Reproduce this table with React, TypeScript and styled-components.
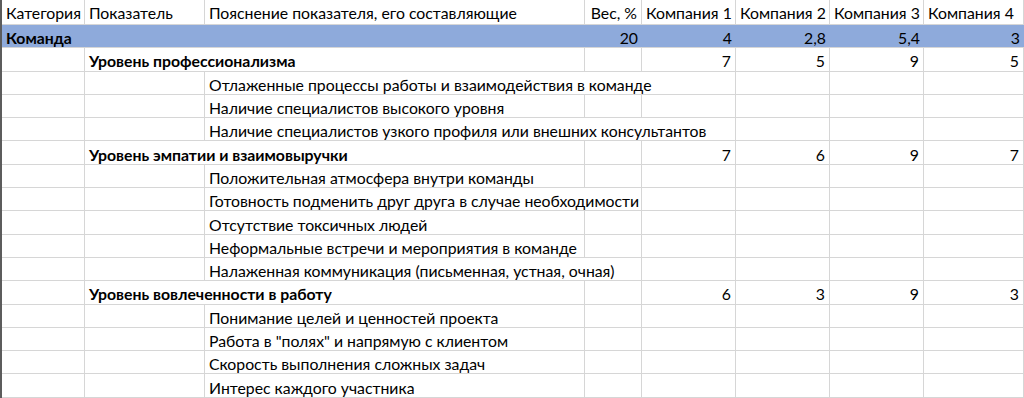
import * as React from 'react';
import styled, {createGlobalStyle} from 'styled-components';

const GlobalStyle = createGlobalStyle`
  html, body {
    margin: 0;
    padding: 0;
    background: #fff;
  }
  body {
    font-family: Lato, "Open Sans", "Liberation Sans", sans-serif;
    color: #000;
    overflow: hidden;
  }
`;

const Sheet = styled.div`
  width: 1024px;
  height: 398px;
  box-sizing: border-box;
  border-left: 2px solid #5c5c5c;
  overflow: hidden;
`;

const Row = styled.div<{$head?: boolean; $fill?: string}>`
  display: grid;
  grid-template-columns: 83px 120px 380px 57px 94px 94px 94px 100px;
  height: ${({$head}) => ($head ? '25px' : '23.3px')};
  background: ${({$fill}) => $fill || 'transparent'};
`;

const Cell = styled.div<{
  $span?: number;
  $right?: boolean;
  $bold?: boolean;
  $plain?: boolean;
  $head?: boolean;
}>`
  grid-column: span ${({$span}) => $span || 1};
  box-sizing: border-box;
  display: flex;
  align-items: center;
  justify-content: ${({$right}) => ($right ? 'flex-end' : 'flex-start')};
  padding: ${({$head}) => ($head ? '1px' : '3px')} 4px 0 4px;
  border-bottom: 1px solid #d6d6d6;
  border-right: ${({$plain}) => ($plain ? 'none' : '1px solid #d6d6d6')};
  font-size: 15.8px;
  font-weight: ${({$bold}) => ($bold ? 700 : 400)};
  white-space: nowrap;
  overflow: visible;
`;

type Entry = {text?: string; span?: number; right?: boolean; bold?: boolean};

// cols: category, indicator, explanation, weight, company 1..4
const blank = (n: number): Entry[] => Array.from({length: n}, () => ({}));
const scores = (vals: string[]): Entry[] =>
  vals.map(v => ({text: v, right: true}));

const indicator = (title: string, vals: string[]): Entry[] => [
  {},
  {text: title, span: 2, bold: true},
  {},
  ...scores(vals)
];

const detail = (text: string, span = 1): Entry[] => [
  {},
  {},
  {text, span},
  ...blank(6 - span)
];

const rows: Entry[][] = [
  indicator('Уровень профессионализма', ['7', '5', '9', '5']),
  detail('Отлаженные процессы работы и взаимодействия в команде', 3),
  detail('Наличие специалистов высокого уровня'),
  detail('Наличие специалистов узкого профиля или внешних консультантов', 3),
  indicator('Уровень эмпатии и взаимовыручки', ['7', '6', '9', '7']),
  detail('Положительная атмосфера внутри команды'),
  detail('Готовность подменить друг друга в случае необходимости', 2),
  detail('Отсутствие токсичных людей'),
  detail('Неформальные встречи и мероприятия в команде'),
  detail('Налаженная коммуникация (письменная, устная, очная)', 2),
  indicator('Уровень вовлеченности в работу', ['6', '3', '9', '3']),
  detail('Понимание целей и ценностей проекта'),
  detail('Работа в "полях" и напрямую с клиентом'),
  detail('Скорость выполнения сложных задач'),
  detail('Интерес каждого участника')
];

const headers = [
  'Категория',
  'Показатель',
  'Пояснение показателя, его составляющие',
  'Вес, %',
  'Компания 1',
  'Компания 2',
  'Компания 3',
  'Компания 4'
];

export default function App() {
  return (
    <Sheet>
      <GlobalStyle />
      <Row $head>
        {headers.map((h, i) => (
          <Cell key={h} $head $right={i === 3}>
            {h}
          </Cell>
        ))}
      </Row>
      <Row $fill="#8eaadb">
        <Cell $bold $plain>
          Команда
        </Cell>
        <Cell $plain />
        <Cell $plain />
        {['20', '4', '2,8', '5,4', '3'].map((v, i) => (
          <Cell key={i} $right $plain>
            {v}
          </Cell>
        ))}
      </Row>
      {rows.map((r, i) => (
        <Row key={i}>
          {r.map((c, j) => (
            <Cell key={j} $span={c.span} $right={c.right} $bold={c.bold}>
              {c.text}
            </Cell>
          ))}
        </Row>
      ))}
    </Sheet>
  );
}
